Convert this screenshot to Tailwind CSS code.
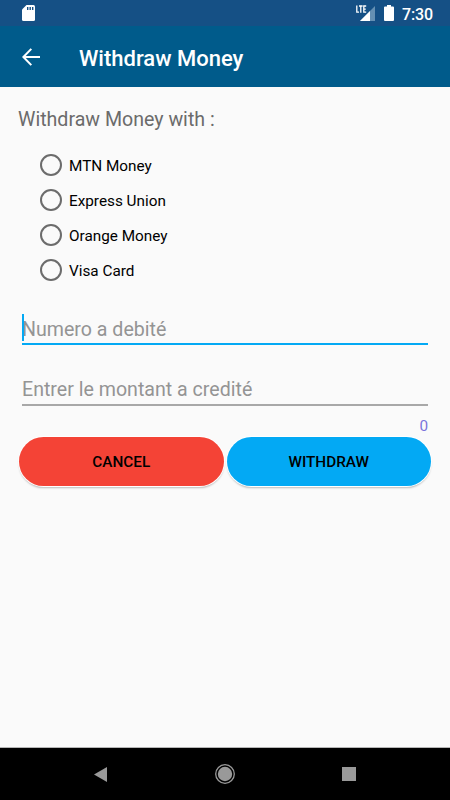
<!DOCTYPE html>
<html lang="fr">
<head>
  <meta charset="UTF-8">
  <meta name="viewport" content="width=device-width, initial-scale=1.0">
  <title>Withdraw Money</title>
  <script src="https://cdn.jsdelivr.net/npm/@tailwindcss/browser@4"></script>
</head>
<body class="bg-[#fafafa] font-['Roboto',sans-serif] h-screen flex flex-col overflow-hidden">
  <!-- Status bar -->
  <div class="h-[26px] shrink-0 bg-[#155085] flex items-center pl-[22px] pr-[17px] text-white">
    <svg class="w-[13px] h-4" viewBox="0 0 13 16">
      <path fill="#fff" d="M4.5 0H11.5Q13 0 13 1.5V14.5Q13 16 11.5 16H1.5Q0 16 0 14.5V4.5Z"/>
      <path fill="#155085" d="M5 2h1.4v3H5zM7.5 2h1.4v3H7.5zM10 2h1.4v3H10z"/>
    </svg>
    <svg class="w-5 h-4 ml-auto" viewBox="0 0 20 16">
      <path fill="#6590b3" d="M19 1V16H4Z"/>
      <path fill="#fff" d="M14 6V16H4Z"/>
      <path fill="#155085" d="M0 0H11V8.5H0Z"/>
      <path fill="none" stroke="#fff" stroke-width="1.3" d="M.8 .4V7.2H3M3 1H6.6M4.8 1V7.8M10.2 1H7.8V7.2H10.2M7.8 4.1H9.8"/>
    </svg>
    <svg class="w-[10px] h-4 ml-2" viewBox="0 0 10 16">
      <path fill="#fff" d="M3 0H7V1.6H9Q10 1.6 10 2.6V15Q10 16 9 16H1Q0 16 0 15V2.6Q0 1.6 1 1.6H3Z"/>
    </svg>
    <span class="ml-2 text-[16px] leading-none font-medium pt-[3px] tracking-[-0.1px]">7:30</span>
  </div>

  <!-- App bar -->
  <header class="h-[61px] shrink-0 bg-[#005b8b] flex items-center pl-[22px] text-white">
    <svg class="w-[18px] h-[18px]" viewBox="0 0 18 18" fill="none" stroke="#fff" stroke-width="2">
      <path d="M18 9H1.5M9.3 .9L1.4 9L9.3 17.1"/>
    </svg>
    <h1 class="ml-[39px] text-[22px] leading-none font-medium pt-[4px]">Withdraw Money</h1>
  </header>

  <main class="flex-1 flex flex-col px-[18px] pt-[21px]">
    <h2 class="text-[19.6px] leading-6 text-[#6b6b6b]">Withdraw Money with :</h2>

    <div class="mt-[15px] pl-[22px] flex flex-col text-[15.3px] text-black">
      <div class="h-[35px] flex items-center gap-[7px]"><span class="size-[22px] rounded-full border-2 border-[#6c6c6c]"></span><span class="pt-[3px]">MTN Money</span></div>
      <div class="h-[35px] flex items-center gap-[7px]"><span class="size-[22px] rounded-full border-2 border-[#6c6c6c]"></span><span class="pt-[3px]">Express Union</span></div>
      <div class="h-[35px] flex items-center gap-[7px]"><span class="size-[22px] rounded-full border-2 border-[#6c6c6c]"></span><span class="pt-[3px]">Orange Money</span></div>
      <div class="h-[35px] flex items-center gap-[7px]"><span class="size-[22px] rounded-full border-2 border-[#6c6c6c]"></span><span class="pt-[3px]">Visa Card</span></div>
    </div>

    <!-- Number field, focused -->
    <div class="relative mx-1 mt-[26px] h-8 border-b-2 border-[#03a9f4] text-[19.6px] leading-[33px] text-[#949494]">
      <span class="absolute left-0 top-[1px] w-0.5 h-[27px] bg-[#03a9f4]"></span>
      Numero a debité
    </div>
    <!-- Amount field -->
    <div class="mx-1 mt-[29px] h-8 border-b-2 border-[#a8a8a8] text-[19.6px] leading-[32px] text-[#949494]">Entrer le montant a credité</div>
    <span class="mt-2.5 mr-1 self-end text-[15.3px] leading-5 text-[#7b74dc]">0</span>

    <div class="flex gap-[3px] pl-[1px] pt-[1px]">
      <button class="h-[49px] w-[204.5px] rounded-full bg-[#f44336] ring-1 ring-white shadow-[0_2px_2px_rgba(0,0,0,0.25)] text-black text-[15.3px] font-medium pt-0.5">CANCEL</button>
      <button class="h-[49px] w-[204.5px] rounded-full bg-[#03a9f4] ring-1 ring-white shadow-[0_2px_2px_rgba(0,0,0,0.25)] text-black text-[15.3px] font-medium pt-0.5">WITHDRAW</button>
    </div>
  </main>

  <!-- Navigation bar -->
  <nav class="h-[53px] shrink-0 bg-black border-t border-[#b5b5b5] flex items-center justify-between px-[94px]">
    <svg class="w-[13px] h-[15px]" viewBox="0 0 13 15"><path fill="#999" d="M13 0V15L0 7.5Z"/></svg>
    <svg class="size-5" viewBox="0 0 20 20">
      <circle cx="10" cy="10" r="9.3" fill="none" stroke="#999" stroke-width="1.3"/>
      <circle cx="10" cy="10" r="7.2" fill="#999"/>
    </svg>
    <span class="size-[14px] bg-[#999]"></span>
  </nav>
</body>
</html>
